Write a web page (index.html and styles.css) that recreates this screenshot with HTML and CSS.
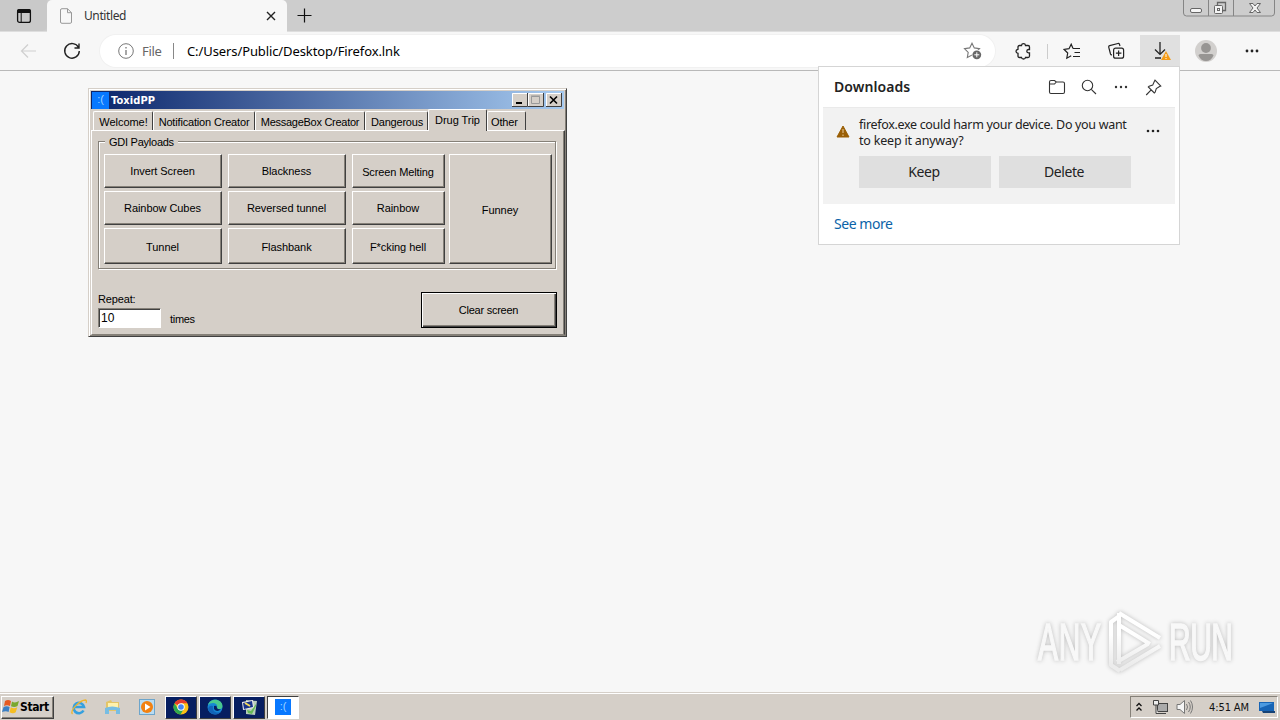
FILE: index.html
```html
<!DOCTYPE html>
<html lang="en">
<head>
<meta charset="utf-8">
<title>Untitled</title>
<link rel="stylesheet" href="styles.css">
</head>
<body>
<div class="screen">
  <header class="tabstrip">
    <div class="tab-actions"><svg width="16" height="16" viewBox="0 0 16 16"><rect x="1.6" y="1.6" width="12.8" height="12.8" rx="2" fill="none" stroke="#111" stroke-width="1.3"/><path d="M1 5V3q0-2 2-2h10q2 0 2 2v2z" fill="#111"/><path d="M5.2 5v9.5" stroke="#111"/></svg></div>
    <div class="browser-tab">
      <svg width="14" height="16" viewBox="0 0 14 16" fill="none" stroke="#999"><path d="M3 .7h5.500l4 4V14q0 1.300-1.300 1.300H3Q1.500 15.300 1.500 14V2Q1.500.7 3 .7zM8.500.7v4h4"/></svg>
      <span class="tab-title">Untitled</span>
      <svg class="tab-close" width="10" height="10" viewBox="0 0 10 10"><path d="M1 1l8 8M9 1L1 9" stroke="#222" stroke-width="1.400"/></svg>
    </div>
    <svg class="new-tab" width="15" height="15" viewBox="0 0 15 15"><path d="M7.500.5v14M.5 7.500h14" stroke="#111" stroke-width="1.200"/></svg>
    <svg class="win-controls" width="95" height="18" viewBox="0 0 95 18" fill="none"><path d="M1.500 0v13q0 3 3 3h85q3 0 3-3V0M26.500 0v16M51.500 0v16" stroke="#858585"/><rect x="8.500" y="8.500" width="11" height="4" rx="1.500" fill="#f5f5f5" stroke="#666"/><path d="M35.500 5.500v-3h8v8h-3" stroke="#666" stroke-width="1.300"/><rect x="32.500" y="5.500" width="8" height="8" rx="1" fill="#f3f3f3" stroke="#666"/><rect x="35.500" y="8.500" width="2" height="2" stroke="#666"/><path d="M67.500 3.500h3.500l2 2.500 2-2.500h3.500l-3.500 4.500 3.500 4.500H75l-2-2.500-2 2.500h-3.500L71 8z" fill="#f3f3f3" stroke="#666"/></svg>
  </header>

  <nav class="toolbar">
    <svg class="back" width="18" height="16" viewBox="0 0 18 16" fill="none" stroke="#cfcfcf" stroke-width="1.200"><path d="M16 8H1.500M8 1.500L1.500 8 8 14.500"/></svg>
    <svg class="reload" width="18" height="18" viewBox="0 0 18 18" fill="none" stroke="#222" stroke-width="1.400"><path d="M15.500 5.500A7.300 7.300 0 1 0 16.300 9M16 1.500v4.500h-4.500"/></svg>
    <div class="address">
      <svg width="16" height="16" viewBox="0 0 16 16" fill="none" stroke="#777"><circle cx="8" cy="8" r="7.300"/><path d="M8 7v5M8 4v1.500" stroke-width="1.300"/></svg>
      <span class="scheme">File</span><i class="bar"></i><span class="url">C:/Users/Public/Desktop/Firefox.lnk</span>
      <svg class="add-fav" width="19" height="18" viewBox="0 0 19 18"><path d="M9 1.200l2.300 4.700 5.200.8-3.800 3.700.9 5.200L9 13.100l-4.700 2.500.9-5.200L1.500 6.700l5.200-.8z" fill="none" stroke="#777" stroke-width="1.100"/><circle cx="13.800" cy="12.800" r="5" fill="#fff"/><circle cx="13.800" cy="12.800" r="4.400" fill="#666"/><path d="M13.800 10.300v5M11.300 12.800h5" stroke="#fff"/></svg>
    </div>
    <div class="tools">
      <svg class="t-ext" width="17" height="17" viewBox="0 0 17 17" fill="none" stroke="#222" stroke-width="1.300"><path d="M4.500 2.500h2q.2-1.800 2-1.800t2 1.800H13q1.500 0 1.500 1.500v2.500h-1q-1.700.3-1.700 1.700t1.700 1.700h1V13q0 1.500-1.500 1.500h-2.500q-.2 1.500-2 1.500t-2-1.500h-2Q3 14.500 3 13v-2.700Q1 10 1 8.300t2-2V4q0-1.500 1.500-1.500z"/></svg>
      <i class="tool-sep"></i>
      <svg class="t-fav" width="18" height="17" viewBox="0 0 18 17" fill="none" stroke="#222" stroke-width="1.200"><path d="M10 5.500L8.200 1.200 6 5.700 1.200 6.500l3.500 3.500-.9 5.200 4.400-2.500M10 5.500h7M11.500 9.500H17M10 13.500h7"/></svg>
      <svg class="t-coll" width="18" height="18" viewBox="0 0 18 18" fill="none" stroke="#222" stroke-width="1.200"><path d="M13 4l-.5-1.600q-.4-1.200-1.600-.9L2.700 3.600Q1.400 4 1.700 5.200L3.500 12q.4 1 1.500.8"/><rect x="6.600" y="6.200" width="10" height="10" rx="2"/><path d="M11.600 8.500v5.500M8.900 11.200h5.500"/></svg>
      <div class="t-down"><svg width="19" height="19" viewBox="0 0 19 19" fill="none"><path d="M8 1v12M3 8.500L8 13.400l5-4.900M3 17h6" stroke="#222" stroke-width="1.300"/><path d="M14 10l5 9H9z" fill="#f49b16"/><path d="M14 13v3M14 17v1" stroke="#fff"/></svg></div>
      <svg class="t-user" width="22" height="22" viewBox="0 0 22 22"><circle cx="11" cy="11" r="11" fill="#d2d0ce"/><circle cx="11" cy="8" r="4.900" fill="#979593"/><path d="M3.500 15.500q0-1.500 2-1.500h11q2 0 2 1.500-2.500 5.500-7.500 5.500t-7.500-5.500z" fill="#979593"/></svg>
      <svg class="t-more" width="14" height="4"><g fill="#222"><circle cx="2" cy="2" r="1.400"/><circle cx="7" cy="2" r="1.400"/><circle cx="12" cy="2" r="1.400"/></g></svg>
    </div>
  </nav>

  <main class="page"></main>

  <footer class="taskbar">
    <div class="start"><svg width="18" height="16" viewBox="0 0 18 16"><path d="M3 2q3-2 6 0L8 7Q5 5.500 2 7z" fill="#e65a20"/><path d="M10 2.500q3 2 7-.5L15.500 7q-3 2-6.500.3z" fill="#79a82e"/><path d="M1.600 8q3-1.700 6 0l-1 5Q4 11.500 0 13z" fill="#3b7fc4"/><path d="M8.800 8.300q3 1.800 6.500 0l-1.600 5Q11 15 7.600 13.300z" fill="#f5bd21"/></svg><b>Start</b></div>
    <svg class="q-ie" width="18" height="18" viewBox="0 0 18 18" fill="none"><path d="M13.500 12.500A5.200 5.200 0 1 1 14 9H5" stroke="#35a0df" stroke-width="2.600"/><path d="M2.500 16C-1 13 10 2 15.500 2q1.500.3.500 3" stroke="#efb52d" stroke-width="1.300"/></svg>
    <svg class="q-folder" width="17" height="17" viewBox="0 0 17 17"><path d="M2 3l5-2 1 2h7v9H2z" fill="#e3c568"/><path d="M4 4h10v6H4z" fill="#fff2ad"/><path d="M1 9q7-3 15 0v6h-4v-4H5v4H1z" fill="#77bde3"/></svg>
    <svg class="q-media" width="16" height="16" viewBox="0 0 16 16"><rect x=".5" y=".5" width="15" height="15" fill="#b9dcf2" stroke="#6da5cb"/><circle cx="8" cy="8" r="6" fill="#f28111"/><path d="M6 4.500L11.500 8 6 11.500z" fill="#fff"/></svg>
    <div class="tasks">
      <div class="task"><svg width="16" height="16" viewBox="0 0 16 16"><circle cx="8" cy="8" r="7.500" fill="#fbc116"/><path d="M8 8L1.500 4.250A7.500 7.500 0 0 1 14.500 4.250H8z" fill="#e33b2e"/><path d="M1.500 4.250A7.500 7.500 0 0 0 7.500 15.500L11 9.500 5 10z" fill="#2da94f"/><circle cx="8" cy="8" r="3.700" fill="#fff"/><circle cx="8" cy="8" r="2.800" fill="#4285f4"/></svg></div>
      <div class="task"><svg width="16" height="16" viewBox="0 0 16 16"><circle cx="8" cy="8" r="7.500" fill="#1687d4"/><path d="M1 6C3-1.500 15-1 15.500 7c0 4-5 4-5.500 2 1-3-1-5-4-5Q3 4 1 6z" fill="#49c98f"/><path d="M6 7q-1 5 3.500 6.500Q13 14 14.500 12A7.500 7.500 0 0 1 1 10q1-4 5-3z" fill="#1263b8"/><path d="M7 7q3-1 3 2 1 2 4 1-4 4-7 0z" fill="#071e60"/></svg></div>
      <div class="task"><svg width="17" height="17" viewBox="0 0 17 17"><path d="M5 1l11 1-2 14-9-1z" fill="#b8cdbb"/><path d="M1 3l11-2 1 8-11 2z" fill="#eee"/><path d="M2 4l9-2 1 6-9 2z" fill="#17338c"/><path d="M4 4l5 3" stroke="#f5dc58" stroke-width="2"/><path d="M15 5l-5 7-4-1 1 3 4 1 4-8z" fill="#65b957"/></svg></div>
      <div class="task active"><span class="sad-icon">:(</span></div>
    </div>
    <div class="tray">
      <svg width="8" height="10" viewBox="0 0 8 10" fill="none" stroke="#111" stroke-width="1.300"><path d="M1.500 4L4 1.500 6.500 4M1.500 8.500L4 6l2.500 2.500"/></svg>
      <svg class="net" width="17" height="16" viewBox="0 0 17 16"><rect x="5.500" y="4.500" width="10" height="8" fill="#aaa" stroke="#444"/><path d="M5 14.500h9" stroke="#444"/><path d="M1.500 1.500h5V6h-5zM4 6v8.500h2" fill="#eee" stroke="#444"/></svg>
      <svg class="vol" width="17" height="16" viewBox="0 0 17 16" fill="none" stroke="#777"><path d="M1 5.500h3L8.500 1.500v13L4 10.500H1z" fill="#f5f5f5"/><path d="M10.500 5q2 3 0 6M12.500 3q3.500 5 0 10M14.500 1.500q4 6.500 0 13"/></svg>
      <time>4:51 AM</time>
      <svg width="16" height="13" viewBox="0 0 16 13"><path d="M0 1h15v9H0z" fill="#1764b5"/><path d="M1 2h13L1 7z" fill="#4c9ae0"/><path d="M3 10h13v2H4z" fill="#164276"/></svg>
    </div>
  </footer>

  <section class="dialog">
    <div class="titlebar"><span class="sad-icon">:(</span><b>ToxidPP</b>
      <svg class="caption" width="51" height="14" viewBox="0 0 51 14"><g fill="#d5cfc8"><path d="M0 0h16v14H0zM16 0h16v14H16zM34 0h16v14H34z"/></g><path d="M.5 13V.5h15M16.500 13V.5h15M34.500 13V.5h15" fill="none" stroke="#fff"/><path d="M0 13.500h15.500V0M16 13.500h15.500V0M34 13.500h15.500V0" fill="none" stroke="#404040"/><path d="M4 9h6v2H4z" fill="#000"/><path d="M19.500 3.500h8v7h-8zM19 3h9" fill="none" stroke="#999"/><path d="M38 3.500l7 7M45 3.500l-7 7" stroke="#000" stroke-width="1.600"/></svg>
    </div>
    <div class="tabs"><span class="w1">Welcome!</span><span class="w2">Notification Creator</span><span class="w3">MessageBox Creator</span><span class="w4">Dangerous</span><span class="w5 selected">Drug Trip</span><span class="w6">Other</span></div>
    <div class="pane">
      <div class="group"><span class="legend">GDI Payloads</span>
        <div class="payloads">
          <button>Invert Screen</button><button>Blackness</button><button class="narrow melting">Screen Melting</button><button class="funney">Funney</button>
          <button>Rainbow Cubes</button><button>Reversed tunnel</button><button class="narrow">Rainbow</button>
          <button class="low">Tunnel</button><button class="low">Flashbank</button><button class="narrow low">F*cking hell</button>
        </div>
      </div>
      <div class="bottom">
        <div><label for="repeat">Repeat:</label><div class="repeat-row"><input id="repeat" value="10"><span>times</span></div></div>
        <button class="clear">Clear screen</button>
      </div>
    </div>
  </section>

  <aside class="downloads">
    <div class="dl-head"><h1>Downloads</h1>
      <svg class="d1" width="18" height="16" viewBox="0 0 18 16" fill="none" stroke="#333" stroke-width="1.100"><path d="M1.500 3q0-1.500 1.500-1.500h3.500L8.300 3H15q1.500 0 1.500 1.500V13q0 1.500-1.500 1.500H3Q1.500 14.500 1.500 13zM1.500 5h5L8.300 3"/></svg>
      <svg class="d2" width="16" height="16" viewBox="0 0 16 16" fill="none" stroke="#333" stroke-width="1.100"><circle cx="6.500" cy="6.500" r="5.200"/><path d="M10.300 10.300L15 15"/></svg>
      <svg class="d3" width="14" height="4"><g fill="#333"><circle cx="2" cy="2" r="1.200"/><circle cx="7" cy="2" r="1.200"/><circle cx="12" cy="2" r="1.200"/></g></svg>
      <svg class="d4" width="17" height="17" viewBox="0 0 17 17" fill="none" stroke="#333" stroke-width="1.100"><path d="M10 1.200l5.800 5.800-1.200.6-3.300 1.900-1.200 3.800-.8.700-6-6 .8-.8 3.600-1.100L9.300 2.500zM6.200 10.800L1.200 16"/></svg>
    </div>
    <div class="dl-item">
      <svg class="warn" width="14" height="13" viewBox="0 0 14 13"><path d="M7 1l6 11H1z" fill="#9a5f05" stroke="#9a5f05" stroke-linejoin="round"/><path d="M7 4v4M7 9.500V11" stroke="#e9cda0"/></svg>
      <div class="dl-body"><p><span class="line-a">firefox.exe could harm your device. Do you want</span><br><span class="line-b">to keep it anyway?</span></p><div class="dl-actions"><button>Keep</button><button>Delete</button></div></div>
      <svg class="item-more" width="14" height="4"><g fill="#222"><circle cx="2" cy="2" r="1.300"/><circle cx="7" cy="2" r="1.300"/><circle cx="12" cy="2" r="1.300"/></g></svg>
    </div>
    <a>See more</a>
  </aside>

  <svg class="watermark" width="240" height="80" viewBox="0 0 240 80">
    <defs><linearGradient id="fade" x1="0" y1="0" x2="0" y2="75" gradientUnits="userSpaceOnUse"><stop offset=".35" stop-color="#fff"/><stop offset=".75" stop-color="#ececec"/></linearGradient></defs>
    <g class="mark-text" transform="translate(0 52) scale(1 1.7)"><text x="8" y="0" textLength="63">ANY</text><text x="139" y="0" textLength="64">RUN</text></g>
    <g class="mark-lines"><path d="M89 5v51M89 5l41 25M89 17l31 19M90 62l40-24M87 54l31-18M88 9l-7 5v43l9 6"/></g>
  </svg>
</div>
</body>
</html>
```
FILE: styles.css
```css
* { box-sizing: border-box; }
body { margin: 0; font-family: "Noto Sans", sans-serif; color: #111; }
svg { display: block; flex: none; }
button { font: inherit; color: inherit; padding: 0; margin: 0; border: 0; border-radius: 0; }
.screen { position: relative; width: 1280px; height: 720px; overflow: hidden; display: flex; flex-direction: column; background: #f7f7f7; }
.tabstrip { height: 32px; display: flex; align-items: flex-start; background: #cdcdcd; border-bottom: 1px solid #dedede; }
.tab-actions { width: 47px; height: 31px; background: #c9c9c9; padding: 8px 0 0 16px; border-radius: 0 0 5px 0; }
.browser-tab { width: 240px; height: 32px; display: flex; align-items: center; background: #f7f7f7; border-radius: 5px 5px 0 0; padding: 0 11px 0 12px; }
.tab-title { font-size: 12px; letter-spacing: -.4px; margin-left: 11px; margin-top: -1px; color: #333; }
.tab-close { margin-left: auto; }
.new-tab { margin: 8px 0 0 10px; }
.win-controls { margin-left: auto; margin-right: 3px; }
.toolbar { height: 39px; flex: none; display: flex; align-items: center; background: #f7f7f7; border-bottom: 1px solid #b9b9b9; }
.back { margin-left: 20px; }
.reload { margin-left: 25px; }
.address { width: 895px; height: 32px; flex: none; margin-left: 19px; border-radius: 16px; background: #fff; box-shadow: 0 0 0 1px #f1f1f1; display: flex; align-items: center; padding: 0 13px 0 18px; }
.scheme { width: 22px; margin-left: 8px; font-size: 13px; letter-spacing: -.3px; color: #666; }
.bar { width: 1px; height: 16px; background: #888; margin-left: 9px; }
.url { font-size: 13px; letter-spacing: -.1px; margin-left: 13px; white-space: nowrap; color: #000; }
.add-fav { margin-left: auto; }
.tools { height: 38px; flex: 1; display: flex; align-items: center; }
.t-ext { margin-left: 20px; }
.tool-sep { width: 1px; height: 15px; margin-left: 15px; background: #ccc; }
.t-fav { margin-left: 15px; }
.t-coll { margin-left: 26px; }
.t-down { width: 40px; height: 32px; margin-left: 15px; background: #e0e0e0; padding: 6px 0 0 12px; }
.t-user { margin-left: 15px; }
.t-more { margin-left: 28px; }
.page { flex: 1; background: #f7f7f7; }

.taskbar { height: 28px; flex: none; display: flex; align-items: center; background: #d5cfc8; border-top: 1px solid #d5cfc8; box-shadow: inset 0 1px #fff; padding-top: 1px; }
.start { width: 53px; height: 23px; display: flex; align-items: center; margin-left: 1px; border: 1px solid; border-color: #fff #404040 #404040 #fff; box-shadow: inset -1px -1px #858078; font: 11px "DejaVu Sans Condensed", sans-serif; color: #000; }
.start b { font-size: 12px; letter-spacing: -.4px; }
.q-ie { margin-left: 16px; }
.q-folder { margin-left: 16px; }
.q-media { margin-left: 18px; }
.tasks { display: flex; gap: 2px; margin-left: 10px; }
.task { width: 32px; height: 23px; background: #071e60; border: 1px solid; border-color: #fff #404040 #404040 #fff; display: flex; align-items: center; justify-content: center; }
.task.active { background: #fff; border-color: #404040 #fff #fff #404040; }
.sad-icon { width: 16px; height: 16px; flex: none; background: #0878ff; color: #9ed2ff; font: 11px/15px "Liberation Sans", sans-serif; text-align: center; }
.tray { width: 148px; height: 22px; margin-left: auto; margin-right: 2px; border: 1px solid; border-color: #858078 #fff #fff #858078; display: flex; align-items: center; padding-left: 4px; }
.net { margin-left: 9px; }
.vol { margin-left: 7px; }
.tray time { width: 42px; margin: 0 8px 0 16px; font: 11px "DejaVu Sans Condensed", sans-serif; letter-spacing: -.1px; white-space: nowrap; }

.dialog { position: absolute; left: 88px; top: 88px; width: 479px; height: 249px; padding: 2px 1px 1px 2px; background: #d5cfc8; border: 1px solid; border-color: #d5cfc8 #404040 #404040 #d5cfc8; box-shadow: inset 1px 1px #fff, inset -1px -1px #858078; font: 11px "Liberation Sans", sans-serif; color: #000; }
.titlebar { width: 473px; height: 18px; display: flex; align-items: center; background: linear-gradient(90deg, #0a246a, #a6caf0); color: #fff; padding: 0 1px; }
.titlebar .sad-icon { width: 17px; height: 17px; }
.titlebar b { font: bold 11px "DejaVu Sans Condensed", sans-serif; letter-spacing: .1px; margin-left: 2px; }
.caption { margin-left: auto; }
.tabs { height: 21px; display: flex; align-items: flex-end; padding-left: 2px; }
.tabs span { height: 19px; line-height: 20px; padding-left: 1px; text-align: center; white-space: nowrap; border: 1px solid; border-color: #fff #404040 transparent #fff; border-bottom: 0; border-radius: 2px 2px 0 0; }
.tabs .w1 { width: 60px; letter-spacing: -.05px; }
.tabs .w2 { width: 102px; letter-spacing: -.17px; padding-left: 0; }
.tabs .w3 { width: 110px; letter-spacing: -.28px; padding-left: 0; }
.tabs .w4 { width: 63px; letter-spacing: -.2px; padding-left: 1px; }
.tabs .w5 { width: 59px; }
.tabs .w6 { width: 39px; letter-spacing: -.15px; text-align: left; padding-left: 3px; }
.tabs .selected { height: 22px; line-height: 20px; background: #d5cfc8; position: relative; margin-bottom: -1px; padding-left: 0; letter-spacing: -.05px; }
.pane { width: 474px; height: 205px; border: 1px solid; border-color: #fff #404040 #858078 #fff; box-shadow: inset -1px 0 #858078; padding: 10px 7px 0 6px; }
.group { width: 458px; height: 128px; border: 1px solid #858078; box-shadow: 1px 1px #fff, inset 1px 1px #fff; padding: 0 0 0 5px; }
.legend { display: block; width: 73px; height: 13px; line-height: 13px; margin: -6px 0 0 1px; padding-left: 4px; background: #d5cfc8; white-space: nowrap; letter-spacing: -.25px; }
.payloads { display: grid; grid-template-columns: 124px 124px 97px 103px; grid-template-rows: 37px 37px 36px; margin-top: 5px; width: 460px; }
.payloads button { width: 118px; height: 34px; }
.payloads .low { height: 36px; padding-top: 2px; }
.payloads .narrow { width: 93px; }
.payloads .melting { padding-top: 1px; letter-spacing: -.12px; }
.payloads .funney { grid-row: 1 / 4; grid-column: 4; width: 103px; height: 110px; padding-top: 1px; }
.dialog button { background: #d5cfc8; border: 1px solid; border-color: #fff #404040 #404040 #fff; box-shadow: inset -1px -1px #858078; white-space: nowrap; letter-spacing: -.06px; padding-right: 1px; }
.bottom { display: flex; justify-content: space-between; padding-top: 23px; }
.bottom label { display: block; height: 16px; line-height: 15px; letter-spacing: -.15px; }
.repeat-row { display: flex; align-items: center; gap: 9px; }
.repeat-row span { margin-top: 2px; letter-spacing: -.3px; }
.repeat-row input { width: 63px; height: 20px; border: 1px solid; border-color: #858078 #fff #fff #858078; box-shadow: inset 1px 1px #404040; padding: 0 2px; font: 12px "Liberation Sans", sans-serif; background: #fff; border-radius: 0; }
.dialog .clear { width: 136px; height: 36px; border: 1px solid #000; box-shadow: inset 1px 1px #fff, inset -1px -1px #404040, inset -2px -2px #858078; letter-spacing: -.25px; }

.downloads { position: absolute; left: 818px; top: 66px; width: 362px; height: 179px; background: #fff; border: 1px solid #d5d5d5; padding: 0 4px; color: #222; }
.dl-head { height: 40px; display: flex; align-items: center; padding: 0 13px 0 11px; }
.dl-head h1 { margin: -2px auto 0 0; font-size: 14px; font-weight: 600; letter-spacing: .08px; }
.d2 { margin-left: 15px; } .d3 { margin-left: 17px; } .d4 { margin-left: 17px; }
.dl-item { height: 97px; display: flex; background: #f2f2f2; border-top: 1px solid #eaeaea; }
.warn { margin: 17px 0 0 13px; }
.dl-body { width: 272px; margin-left: 9px; padding-top: 9px; }
.dl-body p { margin: 0; font-size: 12.5px; line-height: 16px; white-space: nowrap; letter-spacing: -.32px; }
.dl-body .line-b { letter-spacing: -.2px; }
.dl-actions { display: flex; gap: 8px; margin-top: 7px; }
.dl-actions button { width: 132px; height: 32px; background: #dfdfdf; font-size: 14px; letter-spacing: -.4px; padding: 0 2px 1px 0; }
.item-more { margin: 21px 0 0 15px; }
.downloads a { display: block; padding: 10px 0 0 11px; font-size: 14px; line-height: 20px; letter-spacing: -.45px; color: #0b63a8; }
.watermark { position: absolute; left: 1030px; top: 608px; filter: drop-shadow(0 0 2px #bbb); }
.mark-text { font: 30px "Liberation Sans", sans-serif; fill: url(#fade); fill: #f8f8f8; stroke: #f8f8f8; stroke-width: 1; }
.mark-lines { fill: none; stroke: url(#fade); stroke-width: 4; stroke-linejoin: round; }
```
